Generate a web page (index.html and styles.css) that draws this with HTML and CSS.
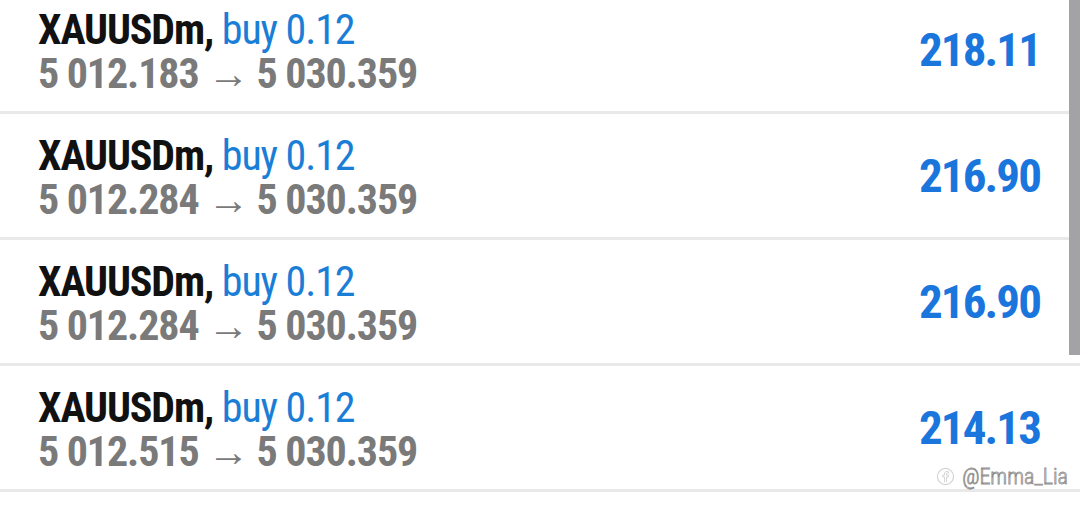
FILE: index.html
```html
<!DOCTYPE html>
<html>
<head>
<meta charset="utf-8">
<link rel="stylesheet" href="styles.css">
</head>
<body>
<div class="screen">
  <div class="list">
    <div class="row">
      <div class="info">
        <div class="title"><span class="sym">XAUUSDm,</span> <span class="side">buy 0.12</span></div>
        <div class="prices">5 012.183 → 5 030.359</div>
      </div>
      <div class="profit">218.11</div>
    </div>
    <div class="row">
      <div class="info">
        <div class="title"><span class="sym">XAUUSDm,</span> <span class="side">buy 0.12</span></div>
        <div class="prices">5 012.284 → 5 030.359</div>
      </div>
      <div class="profit">216.90</div>
    </div>
    <div class="row">
      <div class="info">
        <div class="title"><span class="sym">XAUUSDm,</span> <span class="side">buy 0.12</span></div>
        <div class="prices">5 012.284 → 5 030.359</div>
      </div>
      <div class="profit">216.90</div>
    </div>
    <div class="row">
      <div class="info">
        <div class="title"><span class="sym">XAUUSDm,</span> <span class="side">buy 0.12</span></div>
        <div class="prices">5 012.515 → 5 030.359</div>
      </div>
      <div class="profit">214.13</div>
    </div>
  </div>
  <div class="scrollbar"></div>
  <div class="watermark">
    <svg class="wm-icon" width="19" height="19" viewBox="0 0 20 20"><circle cx="10" cy="10" r="8.5" fill="none" stroke="#d2d2d2" stroke-width="1.2"/><path d="M11 16V10.5h1.8l.3-2H11V7.4c0-.6.2-1 1-1h1.1V4.7c-.2 0-.9-.1-1.6-.1-1.6 0-2.6.9-2.6 2.6v1.3H7.2v2H9V16" fill="none" stroke="#d2d2d2" stroke-width="1"/></svg>
    <span class="wm-text">@Emma_Lia</span>
  </div>
</div>
</body>
</html>
```
FILE: styles.css
```css
* { box-sizing: border-box; }
html, body { margin: 0; padding: 0; background: #fff; }
.screen {
  position: relative;
  width: 1080px;
  height: 512px;
  overflow: hidden;
  font-family: "Roboto Condensed", "Liberation Sans Narrow", Roboto, sans-serif;
  font-stretch: condensed;
}
.list {
  display: flex;
  flex-direction: column;
  margin-top: -12px;
}
.row {
  height: 126px;
  display: flex;
  align-items: flex-start;
  justify-content: space-between;
  padding: 20px 40px 0 38px;
  border-bottom: 3px solid #e9e9e9;
}
.info {
  display: flex;
  flex-direction: column;
}
.title, .prices {
  font-size: 42px;
  line-height: 44px;
  font-weight: 700;
  letter-spacing: -1.1px;
  white-space: nowrap;
}
.sym { color: #111; }
.side { color: #1b7ed6; font-weight: 400; }
.prices { color: #7a7a7a; }
.profit {
  margin-top: 17px;
  font-size: 47px;
  line-height: 50px;
  font-weight: 700;
  letter-spacing: -1.9px;
  color: #1a76dc;
}
.scrollbar {
  position: absolute;
  top: 0;
  right: 0;
  width: 11px;
  height: 355px;
  background: #a3a3a7;
}
.watermark {
  position: absolute;
  right: 12px;
  top: 464px;
  display: flex;
  align-items: center;
  gap: 7px;
}
.wm-text {
  font-family: "Roboto Condensed", Roboto, sans-serif;
  font-size: 22px;
  font-weight: 300;
  color: #fff;
  -webkit-text-stroke: 0.8px #8c8c8c;
}
```
